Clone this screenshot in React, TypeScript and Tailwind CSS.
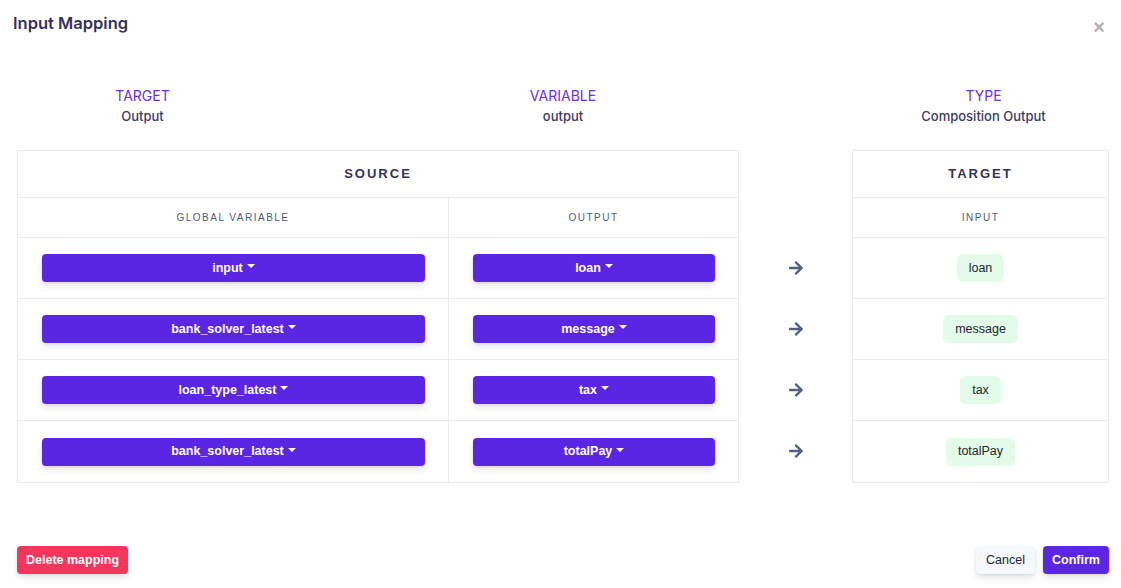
import React from "react";
import { FaArrowRight } from "react-icons/fa";

const rows = [
  { g: "input", o: "loan", t: "loan" },
  { g: "bank_solver_latest", o: "message", t: "message" },
  { g: "loan_type_latest", o: "tax", t: "tax" },
  { g: "bank_solver_latest", o: "totalPay", t: "totalPay" },
];

function Caret() {
  return (
    <span className="ml-[4px] inline-block h-0 w-0 border-l-[4px] border-r-[4px] border-t-[4px] border-l-transparent border-r-transparent border-t-white align-middle relative top-[-2px]" />
  );
}

function DropBtn({ label }: { label: string }) {
  return (
    <button className="flex h-[28px] w-full items-center justify-center rounded-[4px] bg-[#5b25e4] text-[12.5px] font-bold text-white shadow-[0_4px_6px_rgba(50,50,93,0.11),0_1px_3px_rgba(0,0,0,0.08)]">
      <span>{label}</span>
      <Caret />
    </button>
  );
}

export default function App() {
  return (
    <div
      className="flex h-[588px] w-full flex-col bg-white"
      style={{ fontFamily: "'Liberation Sans', Arial, sans-serif" }}
    >
      <div className="flex items-start justify-between pl-[13px] pr-[16px] pt-[12px]">
        <h1
          className="text-[16.5px] font-semibold leading-[22px] text-[#32325d]"
          style={{ fontFamily: "Inter, sans-serif" }}
        >
          Input Mapping
        </h1>
        <span className="mt-[5px] text-[20px] leading-[20px] font-bold text-[#b0b0b0]">×</span>
      </div>

      <div
        className="mt-[49px] grid grid-cols-[251px_1fr_251px] pl-[17px] pr-[12px] text-center"
        style={{ fontFamily: "Inter, sans-serif" }}
      >
        <div>
          <div className="text-[14px] leading-[20px] text-[#6a2ef0]">TARGET</div>
          <div className="text-[13px] leading-[20px] font-medium text-[#3a3a62]">Output</div>
        </div>
        <div>
          <div className="text-[14px] leading-[20px] text-[#6a2ef0]">VARIABLE</div>
          <div className="text-[13px] leading-[20px] font-medium text-[#3a3a62]">output</div>
        </div>
        <div>
          <div className="text-[14px] leading-[20px] text-[#6a2ef0]">TYPE</div>
          <div className="text-[13px] leading-[20px] font-medium text-[#3a3a62]">Composition Output</div>
        </div>
      </div>

      <div className="mt-[24px] flex pl-[17px] pr-[12px]">
        {/* Source table */}
        <div className="w-[722px] border border-[#e9ecef]">
          <div className="flex h-[47px] items-center justify-center border-b border-[#e9ecef] text-[13px] font-bold tracking-[2px] text-[#32325d]">
            SOURCE
          </div>
          <div className="grid h-[40px] grid-cols-[431px_1fr] border-b border-[#e9ecef] text-[10px] tracking-[1.5px] text-[#4f5b7a]">
            <div className="flex items-center justify-center border-r border-[#e9ecef]">GLOBAL VARIABLE</div>
            <div className="flex items-center justify-center">OUTPUT</div>
          </div>
          {rows.map((r, i) => (
            <div
              key={i}
              className={`grid h-[61px] grid-cols-[431px_1fr] ${i < rows.length - 1 ? "border-b border-[#e9ecef]" : ""}`}
            >
              <div className="flex items-center border-r border-[#e9ecef] pl-[24px] pr-[23px]">
                <DropBtn label={r.g} />
              </div>
              <div className="flex items-center pl-[24px] pr-[23px]">
                <DropBtn label={r.o} />
              </div>
            </div>
          ))}
        </div>

        {/* Arrows */}
        <div className="flex flex-1 flex-col pt-[87px]">
          {rows.map((_, i) => (
            <div key={i} className="flex h-[61px] items-center justify-center text-[#525f7f]">
              <FaArrowRight size={16} />
            </div>
          ))}
        </div>

        {/* Target table */}
        <div className="w-[257px] border border-[#e9ecef]">
          <div className="flex h-[47px] items-center justify-center border-b border-[#e9ecef] text-[13px] font-bold tracking-[2px] text-[#32325d]">
            TARGET
          </div>
          <div className="flex h-[40px] items-center justify-center border-b border-[#e9ecef] text-[10px] tracking-[1.5px] text-[#4f5b7a]">
            INPUT
          </div>
          {rows.map((r, i) => (
            <div
              key={i}
              className={`flex h-[61px] items-center justify-center ${i < rows.length - 1 ? "border-b border-[#e9ecef]" : ""}`}
            >
              <span className="flex h-[28px] items-center rounded-[6px] bg-[#e3fcea] px-[12px] text-[12.5px] text-[#212529]">
                {r.t}
              </span>
            </div>
          ))}
        </div>
      </div>

      <div className="mt-auto flex items-center justify-between pl-[17px] pr-[12px] pb-[14px]">
        <button className="h-[28px] rounded-[4px] bg-[#f5365c] px-[9px] text-[12.5px] font-bold text-white shadow-[0_4px_6px_rgba(50,50,93,0.11),0_1px_3px_rgba(0,0,0,0.08)]">
          Delete mapping
        </button>
        <div className="flex gap-[8px]">
          <button className="h-[28px] w-[59px] rounded-[4px] bg-[#f6f9fc] text-[12.5px] text-[#212529] shadow-[0_4px_6px_rgba(50,50,93,0.11),0_1px_3px_rgba(0,0,0,0.08)]">
            Cancel
          </button>
          <button className="h-[28px] w-[66px] rounded-[4px] bg-[#5b25e4] text-[12.5px] font-bold text-white shadow-[0_4px_6px_rgba(50,50,93,0.11),0_1px_3px_rgba(0,0,0,0.08)]">
            Confirm
          </button>
        </div>
      </div>
    </div>
  );
}
